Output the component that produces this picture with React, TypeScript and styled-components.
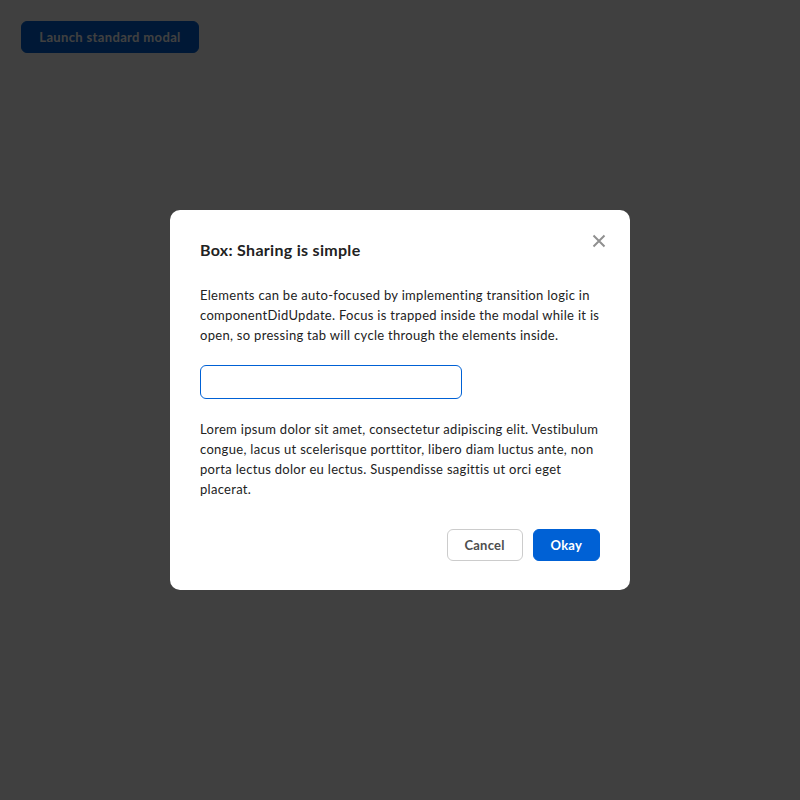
import React from "react";
import styled, { createGlobalStyle } from "styled-components";

const Global = createGlobalStyle`
  html, body { margin: 0; padding: 0; background: #fff; }
  body { font-family: Lato, "Open Sans", sans-serif; width: 800px; height: 800px; }
  * { box-sizing: border-box; }
`;

const Page = styled.div`
  position: relative;
  width: 800px;
  height: 800px;
  padding: 21px;
`;

const PrimaryButton = styled.button`
  height: 32px;
  padding: 0 17px;
  border: 1px solid #0061d5;
  border-radius: 6px;
  background: #0061d5;
  color: #fff;
  font-family: Lato, sans-serif;
  font-weight: 700;
  font-size: 13px;
  letter-spacing: 0.2px;
  cursor: pointer;
`;

const LaunchButton = styled(PrimaryButton)`
  width: 178px;
  padding: 0;
  letter-spacing: 0.35px;
`;

const Overlay = styled.div`
  position: absolute;
  inset: 0;
  background: rgba(0, 0, 0, 0.75);
  display: flex;
  align-items: center;
  justify-content: center;
`;

const Modal = styled.div`
  position: relative;
  width: 460px;
  background: #fff;
  border-radius: 10px;
  padding: 30px 30px 29px;
  color: #222;
`;

const Title = styled.h2`
  margin: 0 0 25px;
  font-size: 16px;
  line-height: 20px;
  font-weight: 700;
  letter-spacing: 0.3px;
  color: #222;
`;

const CloseButton = styled.button`
  position: absolute;
  top: 21px;
  right: 21px;
  width: 20px;
  height: 20px;
  padding: 0;
  border: none;
  background: transparent;
  display: flex;
  align-items: center;
  justify-content: center;
  cursor: pointer;
`;

const Text = styled.p`
  margin: 0;
  font-size: 13px;
  line-height: 20px;
  color: #222;
  letter-spacing: 0.3px;
`;

const Field = styled.input`
  display: block;
  width: 262px;
  height: 34px;
  margin: 20px 0;
  padding: 0 7px;
  border: 1px solid #0061d5;
  border-radius: 6px;
  outline: none;
  font-family: Lato, sans-serif;
  font-size: 13px;
  color: #222;
  caret-color: #222;
`;

const Footer = styled.div`
  display: flex;
  justify-content: flex-end;
  gap: 10px;
  margin-top: 30px;
`;

const SecondaryButton = styled.button`
  height: 32px;
  padding: 0 17px;
  border: 1px solid #ccc;
  border-radius: 6px;
  background: #fff;
  color: #4e4e4e;
  font-family: Lato, sans-serif;
  font-weight: 700;
  font-size: 13px;
  letter-spacing: 0.2px;
  cursor: pointer;
`;

export default function App() {
  return (
    <>
      <Global />
      <Page>
        <LaunchButton>Launch standard modal</LaunchButton>
        <Overlay>
          <Modal>
            <CloseButton aria-label="Close">
              <svg width="14" height="14" viewBox="0 0 14 14">
                <path d="M1.5 1.5 L12.5 12.5 M12.5 1.5 L1.5 12.5" stroke="#909090" strokeWidth="2" strokeLinecap="butt" />
              </svg>
            </CloseButton>
            <Title>Box: Sharing is simple</Title>
            <Text>
              Elements can be auto-focused by implementing transition logic in componentDidUpdate. Focus is
              trapped inside the modal while it is open, so pressing tab will cycle through the elements inside.
            </Text>
            <Field autoFocus />
            <Text>
              Lorem ipsum dolor sit amet, consectetur adipiscing elit. Vestibulum congue, lacus ut scelerisque
              porttitor, libero diam luctus ante, non porta lectus dolor eu lectus. Suspendisse sagittis ut orci
              eget placerat.
            </Text>
            <Footer>
              <SecondaryButton>Cancel</SecondaryButton>
              <PrimaryButton>Okay</PrimaryButton>
            </Footer>
          </Modal>
        </Overlay>
      </Page>
    </>
  );
}
